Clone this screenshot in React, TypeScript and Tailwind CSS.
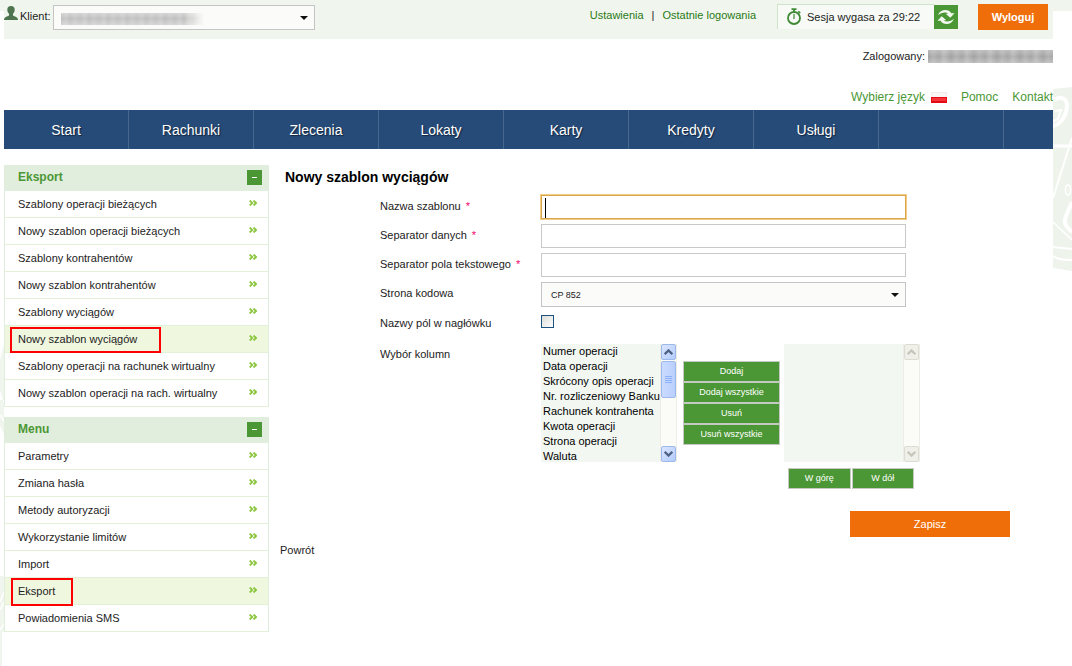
import React from "react";

const NAV = ["Start", "Rachunki", "Zlecenia", "Lokaty", "Karty", "Kredyty", "Usługi"];

const EXPORT_ITEMS = [
  "Szablony operacji bieżących",
  "Nowy szablon operacji bieżących",
  "Szablony kontrahentów",
  "Nowy szablon kontrahentów",
  "Szablony wyciągów",
  "Nowy szablon wyciągów",
  "Szablony operacji na rachunek wirtualny",
  "Nowy szablon operacji na rach. wirtualny",
];

const MENU_ITEMS = [
  "Parametry",
  "Zmiana hasła",
  "Metody autoryzacji",
  "Wykorzystanie limitów",
  "Import",
  "Eksport",
  "Powiadomienia SMS",
];

const COLUMNS = [
  "Numer operacji",
  "Data operacji",
  "Skrócony opis operacji",
  "Nr. rozliczeniowy Banku",
  "Rachunek kontrahenta",
  "Kwota operacji",
  "Strona operacji",
  "Waluta",
];

function UserIcon() {
  return (
    <svg width="14" height="14" viewBox="0 0 14 14" aria-hidden="true">
      <path
        d="M7 0C4.500 0 3.300 1.500 3.300 3.500c0 2 .6 3.300 1.700 4.100v1.800C4.300 10.400 0 10.200 0 14h14c0-3.800-4.300-3.600-5-4.600V7.600c1.100-.8 1.700-2.100 1.700-4.100C10.700 1.500 9.500 0 7 0z"
        fill="#4f7550"
      />
    </svg>
  );
}

function TimerIcon() {
  return (
    <svg width="16" height="18" viewBox="0 0 16 18" fill="none" stroke="#3f8a35" aria-hidden="true">
      <circle cx="8" cy="10" r="6" strokeWidth="1.800" />
      <path d="M5.500 1.200h5M8 1.500v2.500" strokeWidth="1.800" />
      <path d="M12.300 3.200l1.900 1.900" strokeWidth="1.600" />
      <path d="M8 6v5" strokeWidth="1.200" />
    </svg>
  );
}

function RefreshIcon() {
  return (
    <svg width="18" height="16" viewBox="0 0 18 16" aria-hidden="true">
      <g fill="#f3f9f0">
        <path d="M1 6.200C2.300 2.600 5.200 1 8.300 1c2.700 0 4.900 1.200 6.100 3.300H17.500L13.300 8.800 8.700 4.800h2.600C10.300 3.900 9.100 3.600 7.700 3.600 5.200 3.600 3.200 4.500 1 6.200z" />
        <path d="M17 9.800C15.700 13.400 12.800 15 9.700 15c-2.700 0-4.900-1.200-6.100-3.300H.5L4.700 7.200l4.600 4H6.700c1 .9 2.200 1.200 3.600 1.200 2.500 0 4.500-.9 6.700-2.600z" />
      </g>
    </svg>
  );
}

function Chevrons() {
  return (
    <svg
      className="mb-0.5"
      width="8"
      height="6"
      viewBox="0 0 8 6"
      fill="none"
      stroke="#8cc63f"
      strokeWidth="1.800"
      aria-hidden="true"
    >
      <path d="M0.700 0.500L3.300 3L0.700 5.500M4.500 0.500L7.100 3L4.500 5.500" />
    </svg>
  );
}

function Caret() {
  return (
    <svg
      className="pointer-events-none absolute right-[7px] top-1/2 -mt-0.5"
      width="8"
      height="4"
      viewBox="0 0 8 4"
      aria-hidden="true"
    >
      <path d="M0 0h8L4 4z" fill="#111" />
    </svg>
  );
}

function SidePanel({
  title,
  items,
  active,
  markClass,
}: {
  title: string;
  items: string[];
  active: string;
  markClass: string;
}) {
  return (
    <section>
      <div className="flex h-[26px] items-center justify-between bg-[#e1eddd] pl-3.5 pr-[7px]">
        <h2 className="pb-0.5 text-xs font-bold text-[#4b9735]">{title}</h2>
        <button
          type="button"
          aria-label={"Zwiń " + title}
          className="mb-px flex size-[15px] items-center justify-center bg-[#4b9735]"
        >
          <span className="h-px w-[5px] bg-white" />
        </button>
      </div>
      <ul className="border-x border-[#e1eddd]">
        {items.map((item) => (
          <li
            key={item}
            className={
              item === active
                ? "relative border-b border-[#e4f1d9] bg-[#f0f7df]"
                : "relative border-b border-[#e4f1d9] bg-white"
            }
          >
            <a href="#" className="flex h-[26px] items-center justify-between pl-[13px] pr-[11px] text-[11px] text-[#222]">
              {item}
              <Chevrons />
            </a>
            {item === active && <span className={markClass} />}
          </li>
        ))}
      </ul>
    </section>
  );
}

function ScrollButton({ up, disabled }: { up: boolean; disabled: boolean }) {
  return (
    <span
      className={
        disabled
          ? "flex h-4 w-full items-center justify-center rounded-[2px] border border-[#dcdcd2] bg-[#f0f0ea]"
          : "flex h-4 w-full items-center justify-center rounded-[2px] border border-[#9db8ec] bg-linear-to-br from-[#dbe6ff] to-[#b3cbfb]"
      }
    >
      <svg width="9" height="6" viewBox="0 0 9 6" fill="none" stroke={disabled ? "#c5c5ba" : "#4d6185"} strokeWidth="2.200">
        <path d={up ? "M0.700 5.200L4.500 1.400L8.300 5.200" : "M0.700 0.800L4.500 4.600L8.300 0.800"} />
      </svg>
    </span>
  );
}

function ListBox({ label, options }: { label: string; options: string[] }) {
  const empty = options.length === 0;
  return (
    <div className="flex h-[118px] w-[136px] bg-[#f2f7f2]">
      <select
        multiple
        aria-label={label}
        className="h-full min-w-0 flex-1 overflow-hidden border-0 bg-[#f2f7f2] p-0 pt-px text-[11px] leading-[15px] text-black outline-none"
      >
        {options.map((o) => (
          <option key={o} className="h-[15px] px-0.5 py-0 leading-[15px]">
            {o}
          </option>
        ))}
      </select>
      <div aria-hidden="true" className="flex w-[17px] flex-col justify-between border-x border-[#eeede5] bg-[#fbfbf8]">
        <div>
          <ScrollButton up disabled={empty} />
          {!empty && (
            <div className="mt-px flex h-[37px] flex-col items-center justify-center gap-px rounded-[2px] border border-[#9db8ec] bg-linear-to-r from-[#cbdbff] to-[#b9cffc]">
              <span className="h-px w-[7px] bg-[#8cb0f8]" />
              <span className="h-px w-[7px] bg-[#8cb0f8]" />
              <span className="h-px w-[7px] bg-[#8cb0f8]" />
              <span className="h-px w-[7px] bg-[#8cb0f8]" />
            </div>
          )}
        </div>
        <ScrollButton up={false} disabled={empty} />
      </div>
    </div>
  );
}

function GreenButton({ children }: { children: string }) {
  return (
    <button
      type="button"
      className="h-[21px] flex-1 border border-[#c4c9c2] bg-[#4b9735] text-center text-[9px] leading-[19px] text-white"
    >
      {children}
    </button>
  );
}

function TextField({ id, label, focused }: { id: string; label: string; focused?: boolean }) {
  return (
    <div className="flex items-center">
      <label htmlFor={id} className="w-[161px] pb-0.5">
        {label}
        <span className="ml-[5px] text-[#f0006a]">*</span>
      </label>
      <div className="relative w-[365px]">
        <input
          id={id}
          type="text"
          className={
            focused
              ? "block h-6 w-full border border-[#dba64a] bg-white px-1 outline-1 outline-[#f3cd87]"
              : "block h-6 w-full border border-[#c8c8c8] bg-white px-1 outline-none"
          }
        />
        {focused && <span className="absolute left-1 top-[3px] h-5 w-px bg-black" />}
      </div>
    </div>
  );
}

function RightPattern() {
  return (
    <svg className="absolute right-0 top-[86px]" width="19" height="186" viewBox="0 0 19 186" fill="none" aria-hidden="true">
      <path d="M0 3L19 1v184L0 182z" fill="#eef4ec" />
      <g stroke="#fff" strokeWidth="3">
        <path d="M0 14c8-4 14-2 14 6-1 12-8 19-14 20" strokeWidth="4" />
        <path d="M2 25l6-1-3 9-5 2" strokeWidth="2" />
        <path d="M0 60h19" />
        <path d="M19 52L0 112" strokeWidth="2" />
        <path d="M19 116l-6 14c-3 8 0 10 6 16" strokeWidth="4" />
        <ellipse cx="15" cy="104" rx="2.500" ry="5" strokeWidth="1.500" />
        <path d="M0 136l19 18" strokeWidth="1.500" />
        <path d="M0 161l19 2M0 170c5 4 12 4 19 4" strokeWidth="2" />
      </g>
    </svg>
  );
}

function LeftPattern() {
  return (
    <svg className="absolute left-0 top-[330px]" width="4" height="336" viewBox="0 0 4 336" fill="none" aria-hidden="true">
      <path d="M4 14L0 30v30l4 14zM0 70h4v34l-4-8zM0 246h4v56H2v34H0z" fill="#f0f5ee" />
      <path d="M0 85l4 6M4 262l-4 10M0 280l4-8M0 300l4-6" stroke="#fff" strokeWidth="1.500" />
    </svg>
  );
}

export default function App() {
  return (
    <div className="relative min-h-screen bg-[linear-gradient(#f0f5ee_11px,#ffffff_11px)] font-['Liberation_Sans',Arial,sans-serif] text-[11px] leading-4 text-[#222]">
      <RightPattern />
      <LeftPattern />
      <div className="relative ml-1 mr-[19px] bg-white">
        <header className="flex h-[39px] items-start bg-[#f0f5ee] pr-[5px]">
          <div className="flex items-start">
            <div className="pt-1.5">
              <UserIcon />
            </div>
            <label htmlFor="client" className="ml-0.5 w-[33px] whitespace-nowrap pt-2">
              Klient:
            </label>
            <div className="relative mt-[5px]">
              <select
                id="client"
                className="block h-[25px] w-[262px] appearance-none border border-[#c4c4c4] bg-[#fbfbf9] px-2 outline-none"
              />
              <span className="pointer-events-none absolute left-2 top-2 h-3 w-[143px] bg-[linear-gradient(#ffffff50,#ffffff00_45%,#ffffff50),repeating-linear-gradient(90deg,#c0c0c0,#cacaca_5px,#bebebe_9px,#c8c8c8_14px,#c0c0c0_19px)] mask-[linear-gradient(90deg,#000_86%,transparent)]" />
              <Caret />
            </div>
          </div>
          <nav className="ml-auto flex gap-2 pt-[7px] text-[#2a7a16]">
            <a href="#">Ustawienia</a>
            <span className="text-[#222]">|</span>
            <a href="#">Ostatnie logowania</a>
          </nav>
          <div className="ml-[21px] mt-1 flex items-start">
            <div className="flex h-[25px] w-[157px] items-center gap-[5px] border-l border-t border-[#cfe3c9] bg-[#f7faf6] pl-2">
              <TimerIcon />
              <span className="whitespace-nowrap">Sesja wygasa za 29:22</span>
            </div>
            <button
              type="button"
              aria-label="Odśwież sesję"
              className="mt-px flex size-6 items-center justify-center bg-[#4b9735]"
            >
              <RefreshIcon />
            </button>
          </div>
          <button type="button" className="ml-5 mt-1 h-[26px] w-[70px] bg-[#f06e0a] text-[11px] font-bold text-white">
            Wyloguj
          </button>
        </header>

        <div className="mt-[9px] flex h-4 items-center justify-end gap-[3px]">
          <span>Zalogowany:</span>
          <span className="h-[13px] w-[125px] bg-[linear-gradient(#ffffff40,#ffffff00_50%,#ffffff40),repeating-linear-gradient(90deg,#a2a2a2,#b2b2b2_5px,#a6a6a6_11px,#b8b8b8_16px,#a2a2a2_23px)]" />
        </div>

        <div className="mb-[5px] mt-[25px] flex h-4 items-center justify-end text-xs text-[#4b9735]">
          <a href="#" className="flex items-center gap-1.5">
            Wybierz język
            <svg width="16" height="11" viewBox="0 0 16 11" aria-hidden="true">
              <rect width="16" height="6" fill="#f6e9e9" />
              <rect x="1" y="1" width="14" height="4" fill="#faf6f6" />
              <rect y="5" width="16" height="6" fill="#e40a14" />
              <rect x="1" y="6" width="14" height="3" fill="#f5333b" />
            </svg>
          </a>
          <a href="#" className="ml-3.5">Pomoc</a>
          <a href="#" className="ml-3.5">Kontakt</a>
        </div>

        <nav className="flex h-[39px] overflow-hidden bg-[#264b78] text-sm text-white">
          {NAV.map((n) => (
            <a
              key={n}
              href="#"
              className="flex w-[125px] shrink-0 items-center justify-center border-r border-[#48678d] pt-px text-shadow-[1px_1px_1px_#11233c]"
            >
              {n}
            </a>
          ))}
          <span className="w-[125px] shrink-0 border-r border-[#48678d]" />
          <span className="w-[125px] shrink-0 border-r border-[#48678d]" />
        </nav>

        <div className="flex pt-4">
          <aside className="flex w-[265px] shrink-0 flex-col gap-2.5">
            <SidePanel
              title="Eksport"
              items={EXPORT_ITEMS}
              active="Nowy szablon wyciągów"
              markClass="pointer-events-none absolute left-[5px] top-px z-10 h-[26px] w-[151px] border-2 border-[#f00]"
            />
            <SidePanel
              title="Menu"
              items={MENU_ITEMS}
              active="Eksport"
              markClass="pointer-events-none absolute left-1.5 top-0 z-10 h-[28px] w-[62px] border-2 border-[#f00]"
            />
          </aside>

          <main className="min-w-0 flex-1 pl-[11px]">
            <h1 className="pl-[5px] text-sm font-bold leading-6 text-black">Nowy szablon wyciągów</h1>
            <form className="mt-1.5 pl-[100px]">
              <div className="flex flex-col gap-[5px]">
                <TextField id="name" label="Nazwa szablonu" focused />
                <TextField id="sep" label="Separator danych" />
                <TextField id="textsep" label="Separator pola tekstowego" />
                <div className="flex items-center">
                  <label htmlFor="codepage" className="w-[161px] pb-[3px]">Strona kodowa</label>
                  <div className="relative w-[365px]">
                    <select
                      id="codepage"
                      className="block h-[25px] w-full appearance-none border border-[#c4c4c4] bg-[#fbfbf9] px-[9px] text-[9px] outline-none"
                    >
                      <option>CP 852</option>
                    </select>
                    <Caret />
                  </div>
                </div>
                <div className="flex h-[22px] items-center">
                  <label htmlFor="header" className="w-[161px]">Nazwy pól w nagłówku</label>
                  <input
                    id="header"
                    type="checkbox"
                    className="mb-[3px] size-[13px] appearance-none border border-[#1c5180] bg-linear-to-br from-[#dcdcd7] to-white"
                  />
                </div>
              </div>
              <div className="mt-2.5 flex items-start">
                <div className="w-[161px] shrink-0 pt-0.5">Wybór kolumn</div>
                <ListBox label="Dostępne kolumny" options={COLUMNS} />
                <div className="ml-1.5 mt-[17px] flex w-[97px] shrink-0 flex-col">
                  <GreenButton>Dodaj</GreenButton>
                  <GreenButton>Dodaj wszystkie</GreenButton>
                  <GreenButton>Usuń</GreenButton>
                  <GreenButton>Usuń wszystkie</GreenButton>
                </div>
                <div className="ml-1 shrink-0">
                  <ListBox label="Wybrane kolumny" options={[]} />
                  <div className="ml-1 mt-1.5 flex w-[126px] gap-px">
                    <GreenButton>W górę</GreenButton>
                    <GreenButton>W dół</GreenButton>
                  </div>
                </div>
              </div>
              <div className="mt-[22px] flex justify-end pr-[43px]">
                <button type="submit" className="h-[26px] w-40 bg-[#f06e0a] text-[11px] text-white">
                  Zapisz
                </button>
              </div>
            </form>
            <a href="#" className="mt-[5px] block w-fit">Powrót</a>
          </main>
        </div>
      </div>
    </div>
  );
}
